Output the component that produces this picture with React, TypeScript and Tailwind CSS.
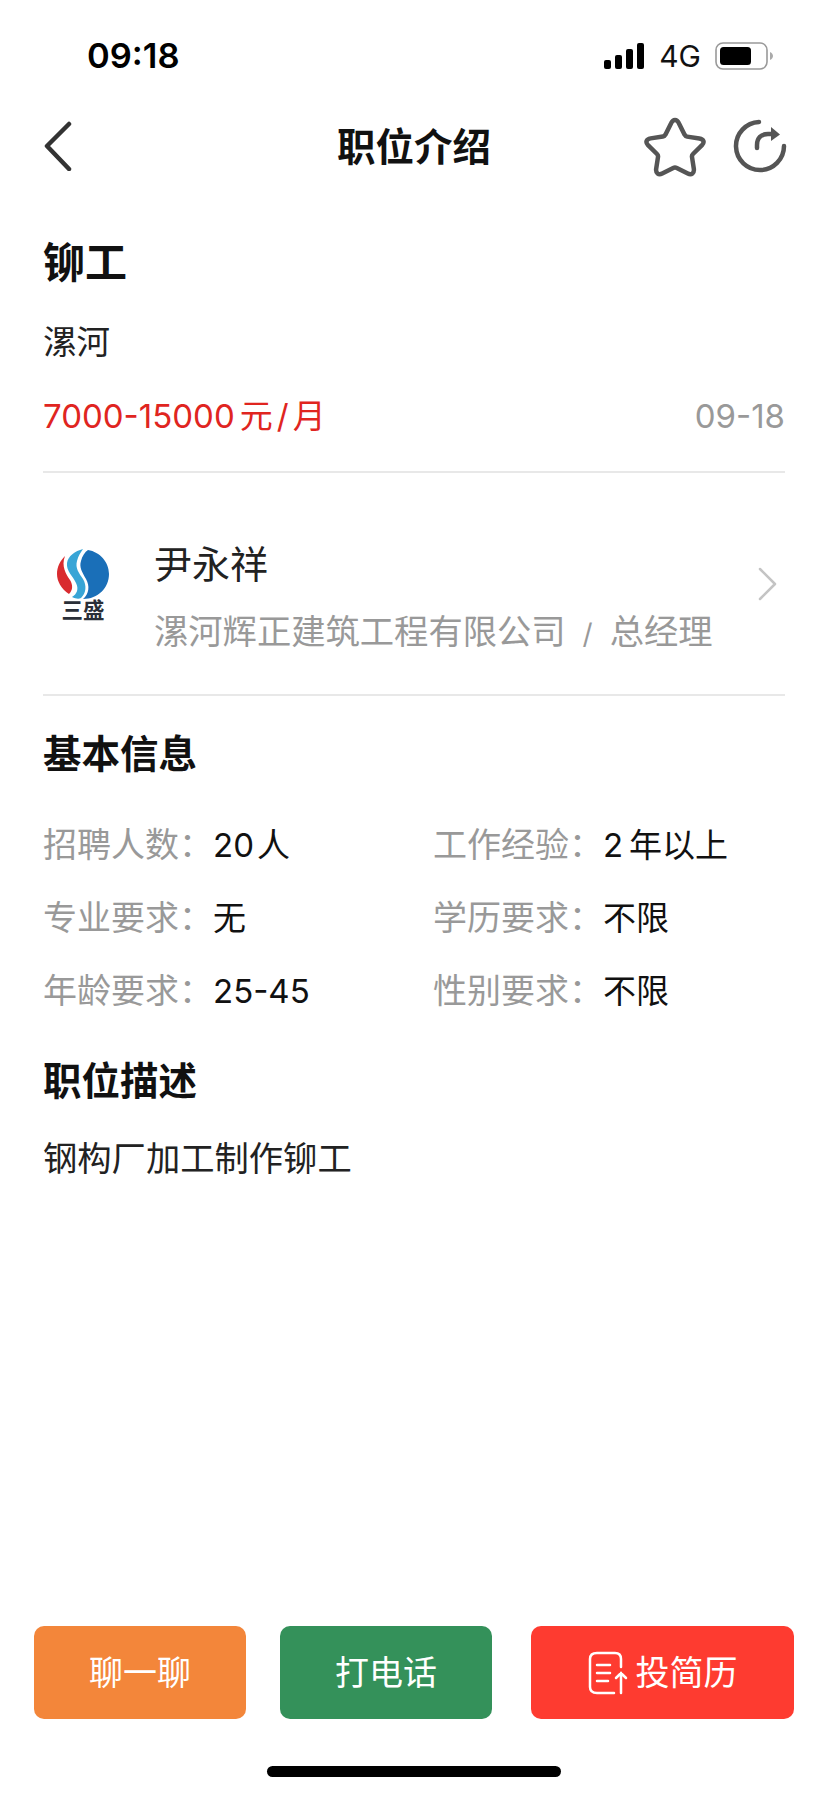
const FONT = { fontFamily: '"Inter", "Noto Sans CJK SC", sans-serif' };

const INFO_ROWS = [
  { leftLabel: "招聘人数：", leftValue: "20\u200a人", rightLabel: "工作经验：", rightValue: "2\u2009年以上" },
  { leftLabel: "专业要求：", leftValue: "无", rightLabel: "学历要求：", rightValue: "不限" },
  { leftLabel: "年龄要求：", leftValue: "25-45", rightLabel: "性别要求：", rightValue: "不限" },
];

function StatusBar() {
  return (
    <div className="flex h-[78px] items-end justify-between pl-[87px] pr-[55px]">
      <span className="mb-[2px] text-[34.500px] leading-[40px] font-semibold text-black">09:18</span>
      <div className="flex items-center gap-[14px] pb-[8px]">
        <svg width="41" height="26" viewBox="0 0 41 26" fill="#000">
          <rect x="0" y="17" width="7" height="9" rx="2" />
          <rect x="11" y="12" width="7" height="14" rx="2" />
          <rect x="22" y="6" width="7" height="20" rx="2" />
          <rect x="33" y="0" width="7" height="26" rx="2" />
        </svg>
        <span className="text-[30px] leading-[28px] text-[#111]">4G</span>
        <svg width="58" height="28" viewBox="0 0 58 28">
          <rect x="1" y="1" width="51" height="26" rx="7" fill="none" stroke="#999" strokeWidth="1.6" />
          <rect x="5" y="5" width="31" height="18" rx="3.5" fill="#000" />
          <path d="M55 10c2 1 3 2.500 3 4s-1 3-3 4z" fill="#aaa" />
        </svg>
      </div>
    </div>
  );
}

function NavBar() {
  return (
    <div className="relative mt-[39px] flex h-[60px] items-center justify-center">
      <svg className="absolute left-[44px] top-[4px]" width="28" height="50" viewBox="0 0 28 50" fill="none" stroke="#333" strokeWidth="4.500" strokeLinecap="round" strokeLinejoin="round">
        <path d="M25 3 3 25l22 23" />
      </svg>
      <span className="text-[38.500px] leading-[48px] font-bold text-[#111]">职位介绍</span>
      <svg className="absolute left-[644px] top-[0px]" width="62" height="60" viewBox="0 0 62 60" fill="none" stroke="#555" strokeWidth="4.500" strokeLinejoin="round">
        <path d="M31 3c1.800 0 3 1.200 4 3.400l5.600 11.300c.6 1.100 1.300 1.700 2.500 1.900l12.300 1.800c4.500.7 5.300 4 2.600 6.800l-9 8.800c-.9.900-1.200 1.800-1 3l1.800 11.700c.7 4.400-2.300 6.700-6 4.800l-11-5.600c-1.200-.6-2.400-.6-3.600 0l-11 5.600c-3.700 1.900-6.700-.4-6-4.800l1.800-11.700c.2-1.200-.1-2.100-1-3l-9-8.800c-2.700-2.800-1.900-6.100 2.600-6.800l12.300-1.800c1.200-.2 1.900-.8 2.500-1.900L27 6.400C28 4.200 29.200 3 31 3z" />
      </svg>
      <svg className="absolute left-[733px] top-[2px]" width="54" height="54" viewBox="0 0 54 54" fill="none" stroke="#555" strokeWidth="4.500" strokeLinecap="round">
        <path d="M26 3A24 24 0 1 0 51 27" />
        <path d="M24 29v-3c0-7 4-11 11-11h3" />
        <path d="M38 8l9 7.500L38 22z" fill="#555" stroke="none" />
      </svg>
    </div>
  );
}

function CompanyLogo() {
  return (
    <div className="flex w-[52px] flex-col items-center">
      <svg width="52" height="52" viewBox="0 0 52 52">
        <path d="M31 2C43 4 52 14 52 26C52 40 41 51 26 51C32 46 33 38 29 31C25 24 22 19 24 13C25 8 28 4 31 2z" fill="#1a6fb8" />
        <path d="M26 1C18 3 11 8 10 15C9 23 16 28 19 35C22 41 20 46 15 49C19 51 22 51 24 50C29 45 30 38 26 31C22 25 18 20 20 13C21 8 24 4 26 1z" fill="#38a5d6" />
        <path d="M8 8C3 13 0 19 0 26C0 33 4 41 12 46C16 42 16 37 13 32C9 26 4 18 8 8z" fill="#d92b2f" />
      </svg>
      <span className="mt-[1px] text-[21.500px] leading-[19px] font-bold whitespace-nowrap text-[#2a2f38]">三盛</span>
    </div>
  );
}

function Divider() {
  return <div className="h-[2px] bg-[#e8e8e8]" />;
}

export default function App() {
  return (
    <div className="flex min-h-[1795px] w-[828px] flex-col bg-white" style={FONT}>
      <StatusBar />
      <NavBar />

      <div className="mt-[58px] px-[43px]">
        <h1 className="text-[42px] leading-[56px] font-bold text-[#111]">铆工</h1>
        <p className="mt-[29px] text-[33.500px] leading-[44px] text-[#222]">漯河</p>
        <div className="mt-[30px] flex items-center justify-between">
          <span className="text-[33px] leading-[44px] text-[#e0251f]">
            7000-15000<span className="ml-[5px]">元</span>
            <span className="mx-[4px]">/</span>月
          </span>
          <span className="text-[33px] leading-[44px] text-[#999]">09-18</span>
        </div>
        <div className="mt-[33px]">
          <Divider />
        </div>

        <div className="flex h-[221px] items-center">
          <div className="ml-[14px] mr-[45px]">
            <CompanyLogo />
          </div>
          <div className="flex flex-1 flex-col gap-[21px] pt-[27px]">
            <span className="text-[38px] leading-[50px] text-[#222]">尹永祥</span>
            <span className="text-[34.300px] leading-[44px] whitespace-nowrap text-[#999]">
              漯河辉正建筑工程有限公司
              <span className="mx-[17px] text-[28px]">/</span>
              总经理
            </span>
          </div>
          <svg className="mr-[7px]" width="20" height="34" viewBox="0 0 20 34" fill="none" stroke="#c4c4c4" strokeWidth="2.500" strokeLinecap="round" strokeLinejoin="round">
            <path d="M2 2l15 15L2 32" />
          </svg>
        </div>
        <Divider />

        <h2 className="mt-[33px] text-[38.500px] leading-[50px] font-semibold text-[#111]">基本信息</h2>
        <div className="mt-[44px] flex flex-col gap-[29px]">
          {INFO_ROWS.map((row) => (
            <div key={row.leftLabel} className="grid grid-cols-[390px_1fr] text-[34px] leading-[44px]">
              <div>
                <span className="text-[#999]">{row.leftLabel}</span>
                <span className="text-[33px] text-[#111]">{row.leftValue}</span>
              </div>
              <div>
                <span className="text-[#999]">{row.rightLabel}</span>
                <span className="text-[33px] text-[#111]">{row.rightValue}</span>
              </div>
            </div>
          ))}
        </div>

        <h2 className="mt-[43px] text-[38.500px] leading-[50px] font-semibold text-[#111]">职位描述</h2>
        <p className="mt-[31px] text-[34.300px] leading-[44px] text-[#222]">钢构厂加工制作铆工</p>
      </div>

      <div className="flex-1" />

      <div className="flex items-stretch pl-[34px] pr-[34px]">
        <button className="h-[93px] w-[212px] rounded-[10px] bg-[#f3863a] text-[34px] text-[#fff]">聊一聊</button>
        <button className="ml-[34px] h-[93px] w-[212px] rounded-[10px] bg-[#34915a] text-[34px] text-[#fff]">打电话</button>
        <button className="ml-[39px] flex h-[93px] w-[263px] items-center justify-center gap-[8px] rounded-[10px] bg-[#fe3b30] text-[34px] text-[#fff]">
          <svg width="40" height="44" viewBox="0 0 40 44" fill="none" stroke="#fff" strokeWidth="2.500" strokeLinecap="round">
            <path d="M33 16V8c0-4-2-6-6-6H9C4 2 2 4 2 8v28c0 4 2 6 7 6h17" />
            <path d="M9 14h13M9 22h13M9 30h11" />
            <path d="M33 42V22M28 27l5-5 5 5" />
          </svg>
          投简历
        </button>
      </div>

      <div className="flex h-[76px] justify-center pt-[47px]">
        <div className="h-[11px] w-[294px] rounded-full bg-black" />
      </div>
    </div>
  );
}
